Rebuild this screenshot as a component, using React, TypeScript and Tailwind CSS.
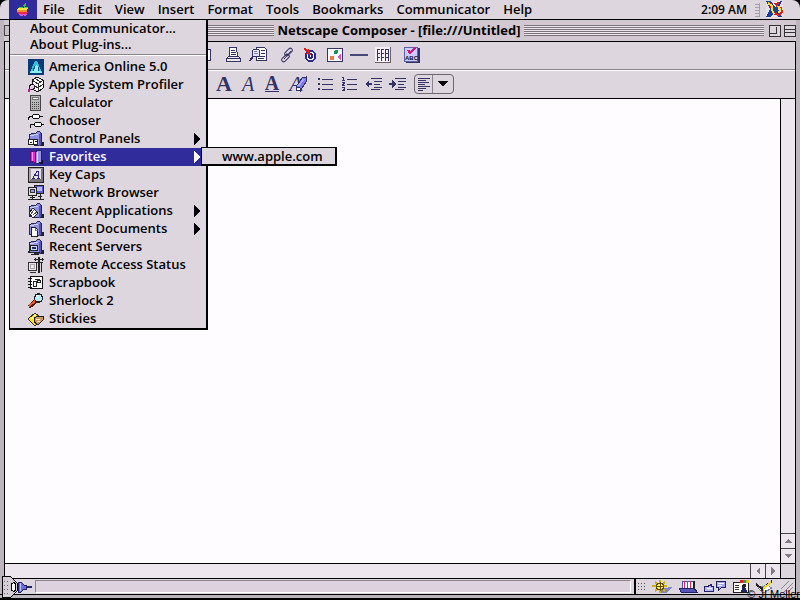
import type { ReactNode } from 'react'

const MENUS = ['File', 'Edit', 'View', 'Insert', 'Format', 'Tools', 'Bookmarks', 'Communicator', 'Help']

function Svg({ w = 16, h = 16, children }: { w?: number; h?: number; children: ReactNode }) {
  return (
    <svg width={w} height={h} viewBox={`0 0 ${w} ${h}`} fill="none" shapeRendering="crispEdges" className="shrink-0" aria-hidden="true">
      {children}
    </svg>
  )
}

/* menu icons */

const AppleIcon = () => (
  <Svg w={14} h={14}>
    <path d="M7 3l1-2 2-1v2L8 4z" fill="#3cba3c" />
    <path d="M3 4h3l1 1 1-1h4v1H2z" fill="#4fd03c" />
    <path d="M2 5h10l-1 2H1z" fill="#ffe63c" />
    <path d="M1 7h10v2H1z" fill="#ff8a28" />
    <path d="M1 9h11l-1 2H2z" fill="#e8284a" />
    <path d="M2 11h9l-2 2H8L7 12l-1 1H4z" fill="#c860d8" />
  </Svg>
)

const AolIcon = () => (
  <Svg>
    <path d="M0 0h16v16H0z" fill="#083a78" />
    <path d="M7 2h2l5 11H2z" fill="#38b8dc" />
    <path d="M8 6l3 3-1 3c2 0 3 0 4 2H2c1-2 2-2 4-2L5 9z" fill="#8cf0f8" />
    <path d="M7 7l-2 5M10 8v4" stroke="#0a5a90" />
  </Svg>
)

const ProfilerIcon = () => (
  <Svg>
    <path d="M4 3l5-3 6 3v8l-5 4-6-3z" fill="#fff" stroke="#111" />
    <path d="M4 3l6 4 5-4M10 7v8M7 1l5 4M4 7l6 4 5-4" stroke="#333" />
    <circle cx="4" cy="10" r="2.5" fill="#e6c8f0" stroke="#222" />
    <path d="M2 12l-2 3" stroke="#a02890" strokeWidth="2" />
  </Svg>
)

const CalculatorIcon = () => (
  <Svg>
    <path d="M2.5.5h10v15h-10z" fill="#b8b4b8" stroke="#444" />
    <path d="M4.500 2.500h6v2h-6z" fill="#eee" stroke="#777" />
    <path d="M4 7.500h8M4 9.500h8M4 11.500h8M4 13.500h8" stroke="#444" strokeDasharray="1 1" />
  </Svg>
)

const ChooserIcon = () => (
  <Svg>
    <path d="M.5 7V4.500l2-1H5M12 3.500h3M2.500 15v-3l2-1H6M13 11.500h3" stroke="#111" />
    <rect x="4.500" y="1.500" width="7" height="4" rx="2" fill="#fff" stroke="#111" />
    <rect x="6.500" y="9.500" width="7" height="4" rx="2" fill="#fff" stroke="#111" />
  </Svg>
)

// blue folder shared by several apple menu entries
function FolderIcon({ children }: { children?: ReactNode }) {
  return (
    <Svg>
      <path d="M12 15h4v-4h-3z" fill="#222" />
      <path d="M1 4l4-2 1 1 5-3 2 2v12l-2 1-10-2z" fill="#9090e0" stroke="#26265a" />
      <path d="M11 3l2-1v12l-2 1z" fill="#5252b8" />
      <path d="M2 5l8-2" stroke="#d0d0ff" />
      {children}
    </Svg>
  )
}

const ControlPanelsIcon = () => (
  <FolderIcon>
    <path d="M.5 8.500h9v5h-9z" fill="#fff" stroke="#222" />
    <path d="M5.500 8v6M2 11.500h2M7 10.500h2" stroke="#222" />
  </FolderIcon>
)

const FavoritesIcon = () => (
  <Svg>
    <path d="M11 15h4v-4h-3z" fill="#111" />
    <path d="M7 3l3-2 3 1v11l-3 2-3-1z" fill="#9494e4" stroke="#222266" />
    <path d="M9.500 3v11" stroke="#e0e0ff" />
    <path d="M2 3l2-1 3 1v11l-2-2-3 1z" fill="#f020d8" stroke="#700a78" />
    <path d="M4.500 3v9" stroke="#ff90f0" />
  </Svg>
)

const KeyCapsIcon = () => (
  <Svg>
    <path d="M.5.500h15v15H.5z" fill="#aaa4aa" stroke="#222" />
    <path d="M3 2h10v10H3z" fill="#e6e0e8" />
    <path d="M1 15l2-3h10l2 3zM13 2l2-1v14l-2-3z" fill="#77717a" />
    <path d="M5 11l4-7h1v7M7 8.500h3M4 11.500h3M9 11.500h3" stroke="#29297a" />
  </Svg>
)

const NetworkIcon = () => (
  <Svg>
    <path d="M6.500.500h9v8h-9z" fill="#5c5cc8" stroke="#222" />
    <path d="M9 2h5v4H9z" fill="#b8b8ff" />
    <path d="M.5 2.500h8v8h-8z" fill="#ddd" stroke="#222" />
    <path d="M2.500 4.500h4v3h-4z" fill="#9c9cf0" stroke="#333" />
    <path d="M4.500 11v3M12.500 9v5M0 14.500h16M2 12.500h5M10 11.500h4" stroke="#222" />
  </Svg>
)

const RecentAppsIcon = () => (
  <FolderIcon>
    <path d="M1 10l4-5 5 5-5 5z" fill="#fff" stroke="#222" />
    <path d="M3 11l3-4M5 12l4-3" stroke="#555" />
  </FolderIcon>
)

const RecentDocsIcon = () => (
  <FolderIcon>
    <path d="M3.500 6.500h4l2 2v7h-6z" fill="#fff" stroke="#222" />
    <path d="M7.500 7v2h2" stroke="#777" />
  </FolderIcon>
)

const RecentServersIcon = () => (
  <FolderIcon>
    <path d="M2.500 6.500h7v5h-7z" fill="#c8d8ff" stroke="#222" />
    <path d="M4 8l4 2M0 13.500h12M3 15.500h8M2 11l-2 2" stroke="#222" />
    <path d="M8 8l-4 2" stroke="#3030a0" />
  </FolderIcon>
)

const RemoteIcon = () => (
  <Svg>
    <path d="M.5 5.500h8v8h-8zM2 15.500h6" stroke="#333" fill="#ece4ec" />
    <path d="M2.500 7.500h4v4h-4z" stroke="#aaa" />
    <path d="M10 0h2v16h-2z" fill="#222" />
    <path d="M6 2.500h10M7 5.500h8M7.500 1v3M14.500 1v3M8.500 5v2M13.500 5v10" stroke="#222" />
  </Svg>
)

const ScrapbookIcon = () => (
  <Svg>
    <path d="M2.500 1.500h12v12h-12z" fill="#fff" stroke="#111" />
    <path d="M0 3.500h4M0 6.500h4M0 9.500h4M0 12.500h4" stroke="#111" />
    <path d="M5.500 6.500h3v5h-3zM9.500 5.500h3v2h-3zM6.500 4.500h5v1" stroke="#222" />
  </Svg>
)

const SherlockIcon = () => (
  <Svg>
    <path d="M1 14l7-6" stroke="#5a1608" strokeWidth="4" />
    <path d="M1 13l6-5" stroke="#e85a28" strokeWidth="2" />
    <circle cx="10.500" cy="5" r="4" fill="#b8ecf8" stroke="#222" strokeWidth="1.500" />
    <path d="M8 4q1-2 3-2" stroke="#fff" />
  </Svg>
)

const StickiesIcon = () => (
  <Svg>
    <path d="M0 8l7-6 7 6-7 7z" fill="#ffe020" stroke="#333" />
    <path d="M2 8l5-5 2 1-6 5z" fill="#fff9a8" />
    <path d="M6 7l4-2h5v4l-5 5-4-3z" fill="#c89860" stroke="#222" />
    <path d="M8 8h4M9 10h3" stroke="#fff0c0" />
  </Svg>
)

const APPLE_ITEMS: { label: string; icon: ReactNode; sub?: boolean; active?: boolean }[] = [
  { label: 'America Online 5.0', icon: <AolIcon /> },
  { label: 'Apple System Profiler', icon: <ProfilerIcon /> },
  { label: 'Calculator', icon: <CalculatorIcon /> },
  { label: 'Chooser', icon: <ChooserIcon /> },
  { label: 'Control Panels', icon: <ControlPanelsIcon />, sub: true },
  { label: 'Favorites', icon: <FavoritesIcon />, sub: true, active: true },
  { label: 'Key Caps', icon: <KeyCapsIcon /> },
  { label: 'Network Browser', icon: <NetworkIcon /> },
  { label: 'Recent Applications', icon: <RecentAppsIcon />, sub: true },
  { label: 'Recent Documents', icon: <RecentDocsIcon />, sub: true },
  { label: 'Recent Servers', icon: <RecentServersIcon /> },
  { label: 'Remote Access Status', icon: <RemoteIcon /> },
  { label: 'Scrapbook', icon: <ScrapbookIcon /> },
  { label: 'Sherlock 2', icon: <SherlockIcon /> },
  { label: 'Stickies', icon: <StickiesIcon /> },
]

function AppleMenu() {
  return (
    <div role="menu" className="absolute left-[9px] top-[19px] z-20 w-[199px] border border-r-2 border-b-2 border-black bg-[#ded6de]">
      <button role="menuitem" className="block h-4 w-full pl-5 text-left leading-[14px]">About Communicator...</button>
      <button role="menuitem" className="block h-4 w-full pl-5 text-left leading-[14px]">About Plug-ins...</button>
      <div className="mt-0.5 mb-0.5 h-0.5 border-t border-b border-t-[#8c848c] border-b-white" />
      {APPLE_ITEMS.map((it) => (
        <div key={it.label} className="relative">
          <button
            role="menuitem"
            className={`flex h-[18px] w-full items-center gap-[5px] pl-[18px] pr-[6px] text-left ${it.active ? 'bg-[#312c9c] text-white' : ''}`}
          >
            {it.icon}
            <span className="flex-1 pb-0.5 whitespace-nowrap">{it.label}</span>
            {it.sub && (
              <Svg w={6} h={12}>
                <path d="M0 0l6 6-6 6z" fill="currentColor" />
              </Svg>
            )}
          </button>
          {it.active && (
            <div role="menu" className="absolute left-[191px] -top-px z-30 w-[136px] border border-r-2 border-b-2 border-black bg-[#ded6de]">
              <button role="menuitem" className="block h-4 w-full pl-5 text-left leading-4">www.apple.com</button>
            </div>
          )}
        </div>
      ))}
    </div>
  )
}

function NetscapeIcon() {
  return (
    <Svg w={17} h={17}>
      <path d="M0 0h17v17H0z" fill="#e8e0e8" />
      <path d="M0 0h5l5 7 4-7h2l-4 8 4 8h-4l-3-5-5 5H0l4-8z" fill="#1840a0" />
      <path d="M3 2l2 2 1 5 3 4 4 1 3-3-1-4-3-1-2-3 3-1" stroke="#d82020" strokeWidth="2" />
      <path d="M2 2l4 3v4l2 4M12 5l2 3-1 4" stroke="#ffe030" strokeWidth="2" />
    </Svg>
  )
}

function MenuBar() {
  return (
    <header className="flex h-5 shrink-0 items-center rounded-t-lg border-b border-black bg-[#ded6de] pl-[9px]">
      <button aria-label="Apple" className="flex h-full w-[28px] items-center justify-center bg-[#312c9c]">
        <AppleIcon />
      </button>
      <nav className="flex flex-1 gap-[13px] pb-0.5 pl-[6px]">
        {MENUS.map((m) => <button key={m}>{m}</button>)}
      </nav>
      <span className="mr-2 text-[12px]">2:09 AM</span>
      <span className="mr-[6px] h-3.5 w-[5px] border-r border-[#a8a0a8] bg-[repeating-linear-gradient(0deg,#a8a0a8_0_1px,#ded6de_1px_3px)]" />
      <button aria-label="Netscape Composer" className="mr-[17px]"><NetscapeIcon /></button>
    </header>
  )
}

const Stripes = () => (
  <div className="h-[11px] flex-1 bg-[repeating-linear-gradient(180deg,#7a727a_0_1px,#efe8ef_1px_2px)]" />
)

function TitleBar() {
  return (
    <div className="flex h-[21px] shrink-0 items-center gap-[3px] bg-[#d2c8d2]">
      <button aria-label="Close" className="mr-4 size-[11px] border border-[#444] bg-[#c8c0c8]" />
      <Stripes />
      <h1 className="pb-0.5 text-center font-bold">Netscape Composer - [file:///Untitled]</h1>
      <Stripes />
      <button aria-label="Zoom" className="ml-0.5 size-[12px] border border-[#333] bg-[#ded6de]">
        <span className="block size-[7px] border-r border-b border-[#333]" />
      </button>
      <button aria-label="Collapse" className="flex size-[12px] items-center border border-[#333] bg-[#ded6de]">
        <span className="block h-1 w-full border-y border-[#333]" />
      </button>
    </div>
  )
}

/* toolbar icons */

const INK = '#333366'

const SaveIcon = () => (
  <Svg w={13}><path d="M.5 2.500h11v11H.5z" fill="#fff" stroke={INK} /></Svg>
)
const PrintIcon = () => (
  <Svg>
    <path d="M3.500 9.500v-9h7l1 9" fill="#fff" stroke={INK} />
    <path d="M5 3.500h4M5 5.500h5M5 7.500h5" stroke={INK} />
    <path d="M.5 14.500v-3l2-2h10l2 2v3z" fill="#eee6ee" stroke={INK} />
    <path d="M1 11.500h14" stroke={INK} />
  </Svg>
)
const FindIcon = () => (
  <Svg w={18}>
    <path d="M7.500.500h8l2 2v11h-10z" fill="#fff" stroke={INK} />
    <path d="M12 3.500h4M12 6.500h4M10 9.500h6M9 11.500h6" stroke={INK} />
    <circle cx="7" cy="6" r="4" fill="#e6e6fa" stroke={INK} />
    <path d="M4 9l-3 5" stroke={INK} strokeWidth="2" />
    <path d="M5 4.500h3M5 6.500h4" stroke="#8080b0" />
  </Svg>
)
const LinkIcon = () => (
  <Svg>
    <g stroke={INK} shapeRendering="auto">
      <rect x="5" y="3" width="9" height="4" rx="2" transform="rotate(-45 9.500 5)" />
      <rect x="2" y="9" width="9" height="4" rx="2" transform="rotate(-45 6.500 11)" />
      <path d="M5 12l7-8M7 7l3 1" />
    </g>
  </Svg>
)
const TargetIcon = () => (
  <Svg>
    <circle cx="7.500" cy="9" r="5" fill="#fff" stroke="#282890" strokeWidth="2" />
    <circle cx="7.500" cy="9" r="2" fill="#fff" stroke="#282890" strokeWidth="2" />
    <path d="M0 2l2-1 2 2 2-1 2 6-5-1 1-2z" fill="#e01818" />
  </Svg>
)
const ImageIcon = () => (
  <Svg>
    <path d="M.5 1.500h15v13H.5z" fill="#fff" stroke={INK} />
    <circle cx="9" cy="5" r="2" fill="#189058" />
    <path d="M3 9h4v4H3z" fill="#f07848" />
    <path d="M14 7v6l-4-3z" fill="#d858b8" />
  </Svg>
)
const LineIcon = () => (
  <Svg w={18}><path d="M0 7h18v2H0z" fill="#484878" /></Svg>
)
const TableIcon = () => (
  <Svg>
    <path d="M0 0h15v15H0z" fill="#f6f0f6" />
    <path d="M15.500 0v15.500H0" stroke="#6a626a" />
    {[2.5, 6.5, 10.5].map((y) => [2, 6, 10].map((x) => (
      <path key={`${x}-${y}`} d={`M${x} ${y}h3M${x + 0.5} ${y}v3`} stroke={INK} />
    )))}
    <path d="M13.500 2v12" stroke={INK} />
  </Svg>
)
const SpellIcon = () => (
  <Svg>
    <path d="M2 1h14v15H2z" fill={INK} />
    <path d="M.5.500h13v14H.5z" fill="#ccccff" stroke="#6060a8" />
    <path d="M4 3l2 3 5-5" stroke="#d01878" strokeWidth="2" />
    <text x="1" y="13" fontSize="6" fontWeight="bold" fill="#111" fontFamily="Liberation Sans, sans-serif">ABC</text>
  </Svg>
)
const EraseIcon = () => (
  <span className="relative flex items-center font-normal italic">
    A
    <span className="absolute left-[6px]">
      <Svg w={12} h={16}>
        <path d="M1 11l6-9 4-1v5l-6 9-4-1z" fill="#7878e8" stroke={INK} />
        <path d="M3 10l6-7" stroke="#a8a8ff" strokeWidth="2" />
        <path d="M1 11l4 1v3l-4-1z" fill="#fff" stroke={INK} />
      </Svg>
    </span>
  </span>
)
const BulletsIcon = () => (
  <Svg>
    <path d="M5 3.500h11M5 8.500h11M5 13.500h11" stroke={INK} />
    <path d="M1 2h2v2H1zM1 7h2v2H1zM1 12h2v2H1z" fill={INK} />
  </Svg>
)
const NumbersIcon = () => (
  <Svg>
    <path d="M6 3.500h10M6 8.500h10M6 13.500h10" stroke={INK} />
    <path d="M1 1.500h1.500v3M1 4.500h3M1 6.500h2.500v1h-1v1h-1v1H4M1 11.500h2.500v3H1M2 13.500h1" stroke={INK} />
  </Svg>
)
const OutdentIcon = () => (
  <Svg w={17}>
    <path d="M6 2.500h11M9 5.500h8M9 8.500h6M9 11.500h8M6 13.500h9" stroke={INK} />
    <path d="M0 8l4-4v3h3v2H4v3z" fill={INK} />
  </Svg>
)
const IndentIcon = () => (
  <Svg w={17}>
    <path d="M6 2.500h11M9 5.500h8M9 8.500h6M9 11.500h8M6 13.500h9" stroke={INK} />
    <path d="M7 8L3 4v3H0v2h3v3z" fill={INK} />
  </Svg>
)

function Tool({ label, children }: { label: string; children: ReactNode }) {
  return (
    <button aria-label={label} title={label} className="flex h-6 w-6 items-center justify-center">
      {children}
    </button>
  )
}

function Toolbars() {
  return (
    <div className="shrink-0 bg-[#ded6de]">
      <div className="flex h-7 items-center gap-[5px] border-b border-[#8c848c] pb-0.5 pl-[188px]">
        <Tool label="Save"><SaveIcon /></Tool>
        <div className="flex">
          <Tool label="Print"><PrintIcon /></Tool>
          <Tool label="Find"><FindIcon /></Tool>
        </div>
        <div className="flex">
          <Tool label="Link"><LinkIcon /></Tool>
          <Tool label="Target"><TargetIcon /></Tool>
          <Tool label="Image"><ImageIcon /></Tool>
          <Tool label="Horizontal line"><LineIcon /></Tool>
          <Tool label="Table"><TableIcon /></Tool>
        </div>
        <Tool label="Spelling"><SpellIcon /></Tool>
      </div>
      <div className="flex h-7 items-center gap-[5px] border-t border-white pb-0.5 pl-[207px] text-[#333366]">
        <div className="flex font-['Liberation_Serif',serif] text-[22px] leading-5">
          <Tool label="Bold"><span className="font-bold">A</span></Tool>
          <Tool label="Italic"><span className="text-[20px] font-normal italic">A</span></Tool>
          <Tool label="Underline"><span className="border-b border-[#333366] text-[20px] leading-4">A</span></Tool>
          <Tool label="Remove styles"><EraseIcon /></Tool>
        </div>
        <div className="flex">
          <Tool label="Bullet list"><BulletsIcon /></Tool>
          <Tool label="Numbered list"><NumbersIcon /></Tool>
          <Tool label="Decrease indent"><OutdentIcon /></Tool>
          <Tool label="Increase indent"><IndentIcon /></Tool>
        </div>
        <button aria-label="Alignment" className="flex h-5 w-10 items-center rounded border border-[#6e666e]">
          <span className="flex h-full w-[18px] items-center justify-center border-r border-[#8c848c]">
            <Svg w={12} h={14}>
              <path d="M0 1.500h12M0 3.500h8M0 5.500h11M0 7.500h7M0 9.500h12M0 11.500h8M0 13.500h5" stroke={INK} />
            </Svg>
          </span>
          <span className="flex flex-1 justify-center">
            <Svg w={10} h={6}><path d="M0 0h10L5 6z" fill="#000" /></Svg>
          </span>
        </button>
      </div>
    </div>
  )
}

function Arrow({ d }: { d: string }) {
  return <Svg w={8} h={8}><path d={d} fill="#847c84" /></Svg>
}

function Editor() {
  return (
    <div className="flex min-h-0 flex-1 flex-col border-y border-black">
      <div className="flex min-h-0 flex-1">
        <textarea aria-label="Document" className="min-w-0 flex-1 resize-none bg-[#fffcff] outline-none" />
        <div className="flex w-[15px] flex-col justify-end border-l border-black bg-[#eee6ee]">
          <button aria-label="Scroll up" className="flex h-[15px] items-center justify-center border-t border-[#444]"><Arrow d="M0 6h8L4 2z" /></button>
          <button aria-label="Scroll down" className="flex h-[15px] items-center justify-center border-t border-[#444]"><Arrow d="M0 2h8L4 6z" /></button>
        </div>
      </div>
      <div className="flex h-[15px] shrink-0 justify-end border-t border-black bg-[#eee6ee]">
        <button aria-label="Scroll left" className="flex w-[15px] items-center justify-center border-l border-[#444]"><Arrow d="M6 0v8L2 4z" /></button>
        <button aria-label="Scroll right" className="flex w-[15px] items-center justify-center border-l border-[#444]"><Arrow d="M2 0v8l4-4z" /></button>
        <div className="w-[15px] border-l border-black bg-[#ded6de]" />
      </div>
    </div>
  )
}

function StatusBar() {
  return (
    <footer className="flex h-[15px] shrink-0 items-center bg-[#ded6de] pl-[13px]">
      <Svg w={14} h={12}>
        <path d="M0 1h3l3 3h2v4H6l-3 3H0z" fill="#6c6cd8" stroke="#222268" />
        <path d="M2.500 2v8" stroke="#c0c0ff" />
        <path d="M8 6h6" stroke="#222268" strokeWidth="2" />
      </Svg>
      <div className="ml-[3px] h-[13px] flex-1 border border-[#8c848c] border-r-white border-b-white bg-[#ded2de]" />
      <div className="ml-[3px] flex h-full items-center gap-[6px] border-l-2 border-black pl-px">
        <span className="h-2.5 w-2 bg-[radial-gradient(#555_1px,transparent_1px)] bg-[size:3px_3px]" />
        <button aria-label="Navigator">
          <Svg w={22} h={13}>
            <path d="M12 8l9-1-5 6H9z" fill="#8484c4" />
            <path d="M9 0v13M1 6h15M4 2l10 9M14 2L4 11" stroke="#d0b010" strokeWidth="2" />
            <circle cx="9" cy="6.500" r="3.500" fill="#ffee50" stroke="#5c4c00" />
            <path d="M9.500 2v9M5 6.500h8" stroke="#5c4c00" />
          </Svg>
        </button>
        <button aria-label="Inbox">
          <Svg w={19} h={13}>
            <path d="M3 1h11v7H3z" fill="#fff" stroke="#5050a0" />
            <path d="M5.500 1v7M8.500 1v7M11.500 1v7" stroke="#c03070" />
            <path d="M14 1h2v7h-2z" fill="#222" />
            <path d="M0 8h15l3 4H2z" fill="#5454b4" stroke="#222268" />
          </Svg>
        </button>
        <button aria-label="Newsgroups">
          <Svg w={23} h={13}>
            <path d="M.5 6.500h3l4-2v2h2v5H.5z" fill="#b8b8f4" stroke="#222268" />
            <path d="M12.500 1.500h9v6h-4l-3 3v-3h-2z" fill="#a4a4ec" stroke="#222268" />
            <path d="M14 3.500h6M14 5.500h4M3 8.500h5" stroke="#fff" />
          </Svg>
        </button>
        <button aria-label="Address book">
          <Svg w={17} h={13}>
            <path d="M.5 2.500h15v10H.5z" fill="#fff" stroke="#222" />
            <path d="M7 0h3v3H7z" fill="#d82828" /><path d="M10 0h3v3h-3z" fill="#28a048" /><path d="M13 0h3v3h-3z" fill="#e0c020" />
            <path d="M2 5.500h4M2 7.500h4M2 9.500h4" stroke="#333" />
            <circle cx="11" cy="6" r="2" fill="#222" /><path d="M8 12q0-4 3-4t3 4z" fill="#222266" />
          </Svg>
        </button>
        <button aria-label="Composer">
          <Svg w={18} h={13}>
            <path d="M2 8l9-3 5 3-9 5z" fill="#fff" stroke="#8080b0" />
            <path d="M0 4l6 5 10-8" stroke="#222" strokeWidth="2" />
            <path d="M7 9l8-7" stroke="#f0d828" strokeWidth="2" />
          </Svg>
        </button>
        <Svg w={15} h={13}>
          <path d="M1 9l8-8M4 12l9-9M8 12l5-5" stroke="#8c848c" />
        </Svg>
      </div>
    </footer>
  )
}

export default function App() {
  return (
    <div className="relative flex h-screen flex-col overflow-hidden bg-black font-['Open_Sans','Noto_Sans',sans-serif] text-[13px] leading-4 font-semibold text-black">
      <MenuBar />
      <main className="flex min-h-0 flex-1 flex-col bg-[#bdb5bd] pr-1 pl-1">
        <TitleBar />
        <div className="flex min-h-0 flex-1 flex-col border border-b-0 border-black">
          <Toolbars />
          <Editor />
          <StatusBar />
        </div>
      </main>
      <div className="h-1 shrink-0 border-t border-black bg-[#bdb5bd]" />
      <div className="h-0.5 shrink-0 bg-black" />
      <AppleMenu />

      {/* collapsed control strip */}
      <button aria-label="Control strip" className="absolute bottom-[2px] left-[2px] z-10">
        <Svg w={16} h={22}>
          <path d="M.5.500h8l7 7v7l-7 7h-8z" fill="#d6ced6" stroke="#000" />
          <path d="M9.500 7.500l3-1 1 2v5l-1 2-3-1z" fill="#fff" stroke="#000" />
          <path d="M2.500 5v13M5.500 5v13" stroke="#666" strokeDasharray="1 3" />
        </Svg>
      </button>
      <small className="absolute right-0 bottom-0 z-10 font-['Liberation_Sans',sans-serif] text-[11px] leading-3 font-normal whitespace-nowrap">
        © JI Meller
      </small>
    </div>
  )
}
